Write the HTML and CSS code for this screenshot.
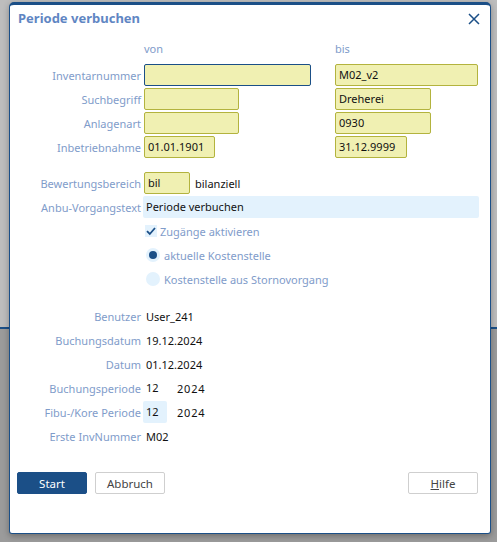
FILE: index.html
```html
<!DOCTYPE html>
<html lang="de">
<head>
<meta charset="utf-8">
<title>Periode verbuchen</title>
<link rel="stylesheet" href="styles.css">
</head>
<body>
<div class="dialog">
  <div class="header">
    <span class="title">Periode verbuchen</span>
    <svg class="close" width="12" height="12" viewBox="0 0 12 12"><path d="M1 1 L11 11 M11 1 L1 11" stroke="#1b4f87" stroke-width="1.5" fill="none"/></svg>
  </div>

  <div class="row colhead">
    <span></span><span class="lbl-left">von</span><span class="lbl-left">bis</span>
  </div>

  <div class="group range">
    <div class="row"><label>Inventarnummer</label><span class="field focus w167"></span><span class="field w143">M02_v2</span></div>
    <div class="row"><label>Suchbegriff</label><span class="field w95"></span><span class="field w96">Dreherei</span></div>
    <div class="row"><label>Anlagenart</label><span class="field w95"></span><span class="field w96">0930</span></div>
    <div class="row"><label>Inbetriebnahme</label><span class="field w71">01.01.1901</span><span class="field w72">31.12.9999</span></div>
  </div>

  <div class="group opts">
    <div class="row2"><label>Bewertungsbereich</label><div class="inline"><span class="field w46">bil</span><span class="val">bilanziell</span></div></div>
    <div class="row2"><label>Anbu-Vorgangstext</label><span class="textbox">Periode verbuchen</span></div>
    <div class="row2"><span></span><div class="inline check"><span class="cbox"><svg width="12" height="12" viewBox="0 0 12 12"><path d="M2 6.2 L4.8 9 L10 3" stroke="#1b4f87" stroke-width="1.8" fill="none"/></svg></span><span class="optlbl">Zugänge aktivieren</span></div></div>
    <div class="row2"><span></span><div class="inline radio"><span class="rb on"></span><span class="optlbl">aktuelle Kostenstelle</span></div></div>
    <div class="row2"><span></span><div class="inline radio"><span class="rb"></span><span class="optlbl">Kostenstelle aus Stornovorgang</span></div></div>
  </div>

  <div class="group info">
    <div class="row2"><label>Benutzer</label><span class="val">User_241</span></div>
    <div class="row2"><label>Buchungsdatum</label><span class="val">19.12.2024</span></div>
    <div class="row2"><label>Datum</label><span class="val">01.12.2024</span></div>
    <div class="row2"><label>Buchungsperiode</label><div class="inline period"><span class="pm">12</span><span class="py">2024</span></div></div>
    <div class="row2"><label>Fibu-/Kore Periode</label><div class="inline period"><span class="pm sel">12</span><span class="py">2024</span></div></div>
    <div class="row2"><label>Erste InvNummer</label><span class="val">M02</span></div>
  </div>

  <div class="buttons">
    <button class="btn primary">Start</button>
    <button class="btn">Abbruch</button>
    <span class="spacer"></span>
    <button class="btn"><u>H</u>ilfe</button>
  </div>
</div>
</body>
</html>
```
FILE: styles.css
```css
html, body {
  margin: 0;
  padding: 0;
}
body {
  width: 497px;
  height: 542px;
  overflow: hidden;
  background: linear-gradient(#bdbdbd 0, #bdbdbd 327px, #1b4f87 327px, #1b4f87 329px, #9b9b9b 329px);
  font-family: "Noto Sans", "Liberation Sans", sans-serif;
  font-size: 11px;
  color: #111;
  position: relative;
}
.dialog {
  position: absolute;
  left: 9px;
  top: 2px;
  width: 480px;
  height: 528px;
  background: #fff;
  border: 1px solid #1b4f87;
  border-top-width: 3px;
  border-radius: 5px 5px 3px 3px;
  box-shadow: 0 2px 6px rgba(0,0,0,0.3);
}
.header {
  height: 25px;
  display: flex;
  align-items: center;
  justify-content: space-between;
  padding: 0 10px 0 8px;
}
.title {
  font-size: 13px;
  font-weight: bold;
  color: #5f86c3;
}
.close {
  margin-top: 2px;
}
.row, .row2 {
  display: grid;
  grid-template-columns: 131px 188px 143px;
  column-gap: 3px;
  align-items: center;
  height: 22px;
}
.row2 {
  grid-template-columns: 131px 335px;
}
label {
  text-align: right;
  color: #7f9cca;
  white-space: nowrap;
}
.colhead {
  margin-top: 10px;
  height: 16px;
  color: #7f9cca;
}
.group {
  display: flex;
  flex-direction: column;
  gap: 2px;
}
.range { margin-top: 8px; }
.opts { margin-top: 14px; }
.info { margin-top: 15px; }
.field {
  box-sizing: border-box;
  height: 22px;
  line-height: 20px;
  padding: 0 3px;
  background: #f0f0b2;
  border: 1px solid #b3b33e;
  border-radius: 2px;
  color: #111;
  white-space: nowrap;
}
.field.focus { border-color: #1b4f87; }
.w167 { width: 167px; }
.w143 { width: 143px; }
.w95 { width: 95px; }
.w96 { width: 96px; }
.w71 { width: 71px; }
.w72 { width: 72px; }
.w46 { width: 46px; }
.inline {
  display: flex;
  align-items: center;
  height: 22px;
}
.inline .val { margin-left: 3px; }
.textbox {
  margin-left: -1px;
  height: 22px;
  line-height: 22px;
  padding-left: 3px;
  background: #e3f2fd;
  border-radius: 2px;
}
.cbox {
  width: 12px;
  height: 12px;
  background: #e3f2fd;
  margin-left: 1px;
  display: flex;
}
.check .optlbl { margin-left: 3px; }
.optlbl { color: #7f9cca; }
.rb {
  box-sizing: border-box;
  width: 14px;
  height: 14px;
  border-radius: 50%;
  background: #e3f2fd;
  margin-left: 2px;
  display: flex;
  align-items: center;
  justify-content: center;
}
.rb.on::after {
  content: "";
  width: 8px;
  height: 8px;
  border-radius: 50%;
  background: #1b4f87;
}
.radio .optlbl { margin-left: 4px; }
.val { padding-left: 2px; }
.period .pm {
  width: 21px;
  height: 22px;
  line-height: 22px;
  padding-left: 3px;
  margin-left: -1px;
  border-radius: 2px;
}
.period .pm.sel { background: #e3f2fd; }
.period .py {
  margin-left: 10px;
  letter-spacing: 0.8px;
}
.buttons {
  display: flex;
  align-items: center;
  gap: 8px;
  margin-top: 25px;
  padding: 0 12px 0 7px;
}
.spacer { flex: 1; }
.btn {
  box-sizing: border-box;
  width: 70px;
  height: 22px;
  font-family: inherit;
  font-size: 11.5px;
  color: #444;
  background: #fff;
  border: 1px solid #cfcfcf;
  border-radius: 2px;
  padding: 0;
}
.btn.primary {
  background: #1b4f87;
  border-color: #1b4f87;
  color: #fff;
}
.btn u { text-decoration-thickness: 1px; }
```
